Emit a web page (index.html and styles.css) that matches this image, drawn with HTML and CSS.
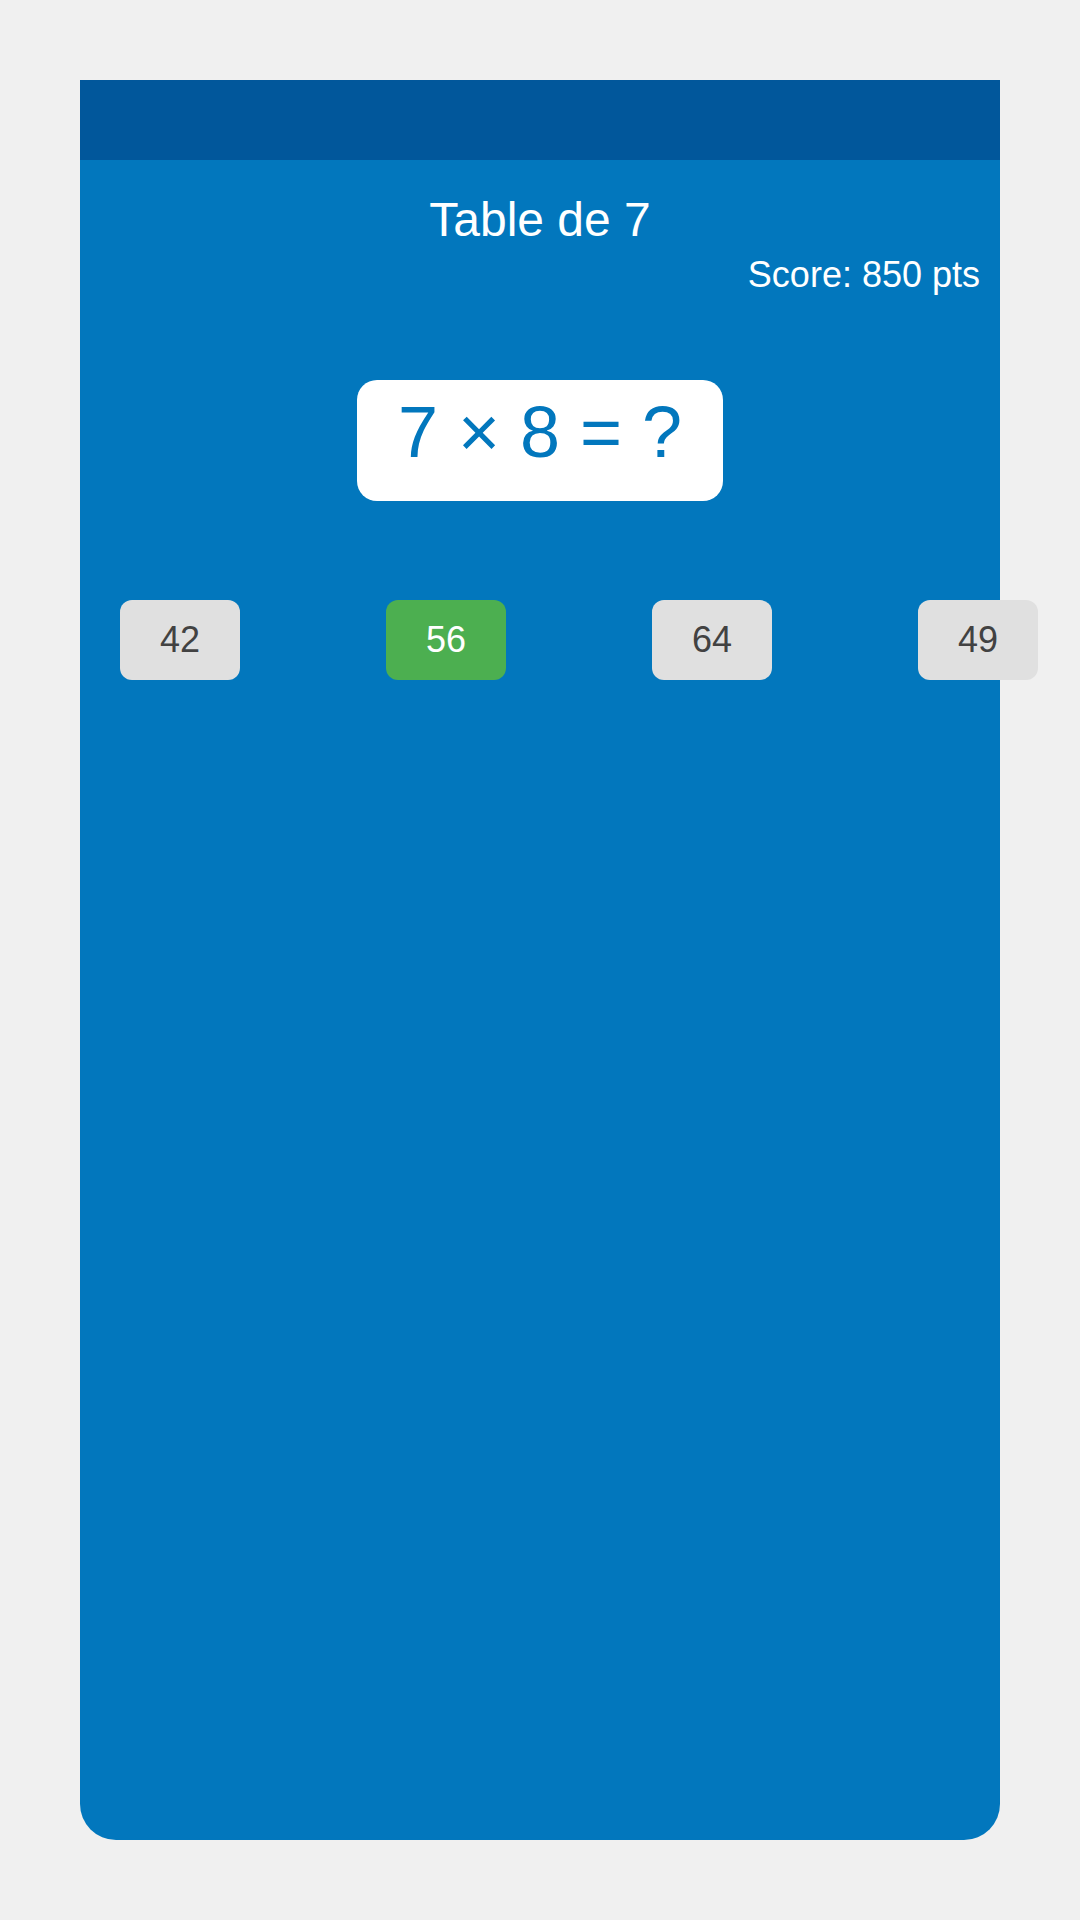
FILE: index.html
```html
<!DOCTYPE html>
<html lang="fr">
<head>
<meta charset="utf-8">
<title>Table de 7</title>
<link rel="stylesheet" href="styles.css">
</head>
<body>
<div class="app">
  <div class="header"></div>
  <h1 class="title">Table de 7</h1>
  <div class="score">Score: 850 pts</div>
  <div class="question-wrap">
    <div class="question">7 × 8 = ?</div>
  </div>
  <div class="answers">
    <div class="answer">42</div>
    <div class="answer answer-correct">56</div>
    <div class="answer">64</div>
    <div class="answer">49</div>
  </div>
</div>
</body>
</html>
```
FILE: styles.css
```css
html, body {
  margin: 0;
  padding: 0;
}
body {
  background: #f0f0f0;
  font-family: "Liberation Sans", Arial, sans-serif;
  padding: 80px;
  box-sizing: border-box;
  height: 1920px;
}
.app {
  width: 920px;
  height: 1760px;
  background: #0277bd;
  border-radius: 0 0 36px 36px;
}
.header {
  height: 80px;
  background: #01579b;
}
.title {
  margin: 32px 0 0;
  font-size: 48px;
  font-weight: normal;
  color: #ffffff;
  text-align: center;
  line-height: normal;
}
.score {
  margin-top: 7px;
  padding-right: 20px;
  text-align: right;
  font-size: 36px;
  color: #ffffff;
}
.question-wrap {
  margin-top: 84px;
  display: flex;
  justify-content: center;
}
.question {
  background: #ffffff;
  border-radius: 20px;
  padding: 11px 41px 28px;
  font-size: 72px;
  color: #0277bd;
}
.answers {
  margin-top: 99px;
  display: flex;
  gap: 146px;
  padding-left: 40px;
}
.answer {
  flex-shrink: 0;
  width: 120px;
  height: 80px;
  border-radius: 12px;
  background: #e0e0e0;
  color: #424242;
  font-size: 36px;
  display: flex;
  align-items: center;
  justify-content: center;
}
.answer-correct {
  background: #4caf50;
  color: #ffffff;
}
```
